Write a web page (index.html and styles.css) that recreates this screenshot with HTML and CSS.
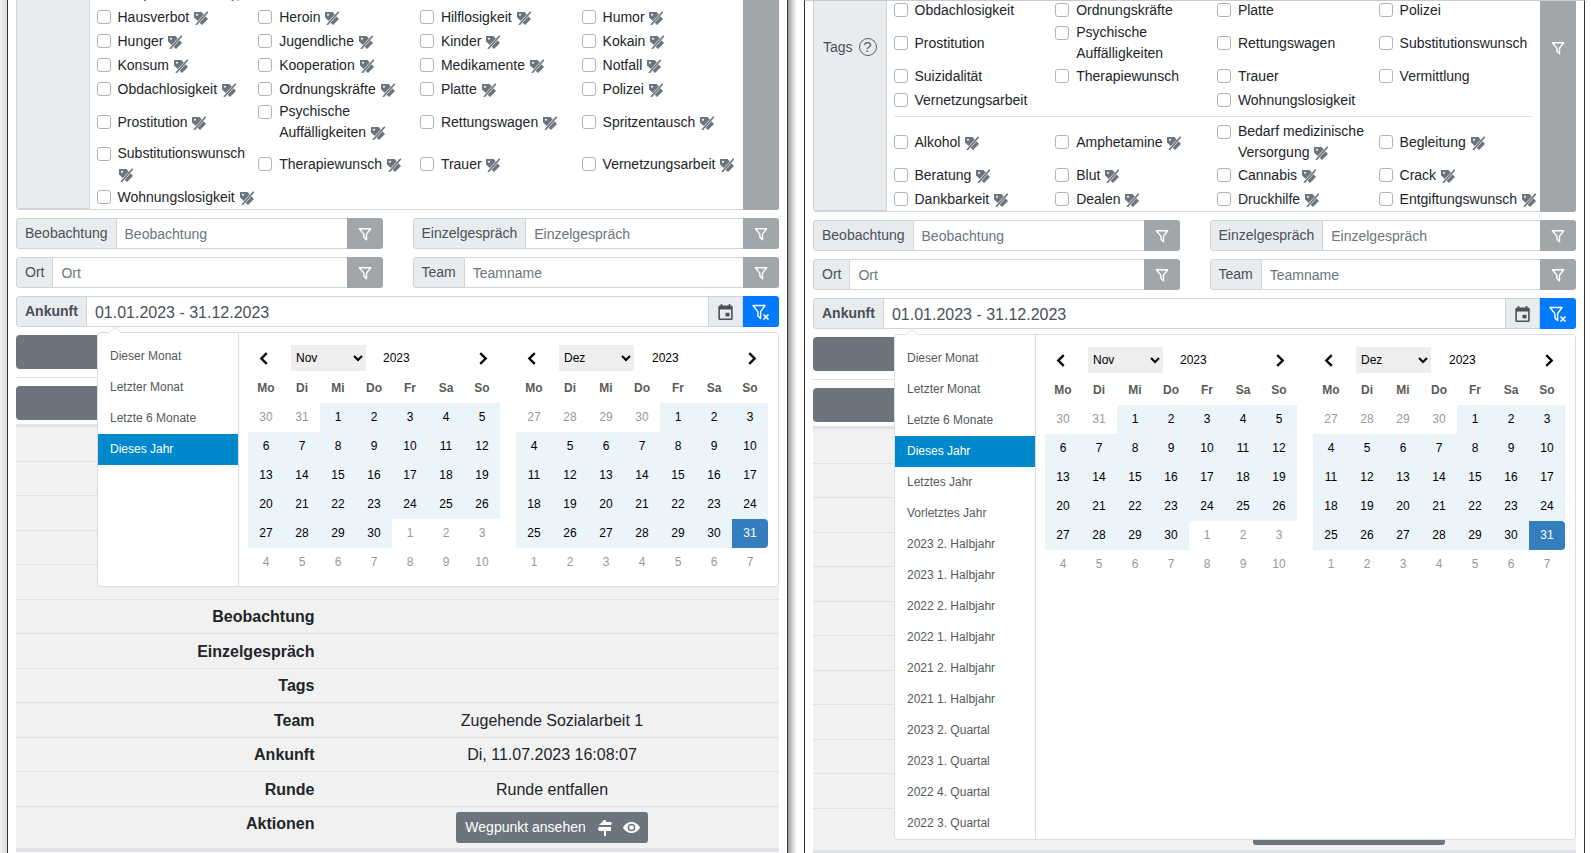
FILE: index.html
```html
<!DOCTYPE html>
<html lang="de">
<head>
    <meta charset="UTF-8">
    <title>Wegpunkte</title>
    <link rel="stylesheet" href="styles.css">
</head>
<body>

    <!-- Icons -->
    <svg class="sprites" xmlns="http://www.w3.org/2000/svg">
        <symbol id="ic-tag" viewBox="0 0 14 14">
            <path fill="currentColor" d="M0 1h7.500l6.500 7-6 6L0 6.500z"/>
            <circle cx="3" cy="3.800" r="1" fill="#fff"/>
            <path stroke="#fff" stroke-width="2.600" d="M14.500 0 1.500 14.500"/>
            <path stroke="currentColor" stroke-width="1.700" d="M13.800 .8 2 14"/>
        </symbol>
        <symbol id="ic-filter" viewBox="0 0 16 16">
            <path fill="none" stroke="currentColor" stroke-width="1.600" stroke-linejoin="round" d="M1.500 2h13L9.700 8.200V14.500L6.700 11.800V8.200z"/>
        </symbol>
        <symbol id="ic-filter-x" viewBox="0 0 18 16">
            <path fill="none" stroke="currentColor" stroke-width="1.400" stroke-linejoin="round" d="M1 1.500h12L8.600 7.600V14.500L5.900 12V7.600z"/>
            <path stroke="currentColor" stroke-width="1.600" d="M11.500 10.500l5 5m0-5l-5 5"/>
        </symbol>
        <symbol id="ic-calendar" viewBox="3 1 18 20">
            <path fill="currentColor" d="M19 3h-1V1h-2v2H8V1H6v2H5a2 2 0 0 0-2 2v14a2 2 0 0 0 2 2h14a2 2 0 0 0 2-2V5a2 2 0 0 0-2-2zm0 16H5V8h14z"/>
            <path fill="currentColor" d="M12 12h5v4.500h-5z"/>
        </symbol>
        <symbol id="ic-signs" viewBox="0 0 14 16">
            <path fill="currentColor" d="M6 0h2v2h5l1 1.500L13 5H1zM1 7h12v4H8v5H6v-5H1l-1-2z"/>
        </symbol>
        <symbol id="ic-eye" viewBox="0 0 17 13">
            <path fill="currentColor" d="M8.500 1C4.500 1 1.500 3.500 0 6.500 1.500 9.500 4.500 12 8.500 12s7-2.500 8.500-5.500C15.500 3.500 12.500 1 8.500 1z"/>
            <circle cx="8.500" cy="6.500" r="3.800" fill="#6c757d"/>
            <circle cx="8.500" cy="6.500" r="2.300" fill="#fff"/>
        </symbol>
        <symbol id="ic-prev" viewBox="0 0 8 12">
            <path fill="none" stroke="currentColor" stroke-width="2.200" d="M7 1 2 6l5 5"/>
        </symbol>
        <symbol id="ic-next" viewBox="0 0 8 12">
            <path fill="none" stroke="currentColor" stroke-width="2.200" d="M1 1l5 5-5 5"/>
        </symbol>
    </svg>

    <div class="edge"></div>

    <!-- Left window -->
    <div class="win win-left">
        <div class="tags">
            <div class="addon tags-label"></div>
            <div class="tags-body">
                <div class="tag-grid">
                    <label class="tag tag-wide"><span class="box"></span><span>Gesprächsbedarf <svg class="ic-tag"><use href="#ic-tag"/></svg></span></label>
                    <label class="tag"><span class="box"></span><span>Hausverbot <svg class="ic-tag"><use href="#ic-tag"/></svg></span></label>
                    <label class="tag"><span class="box"></span><span>Heroin <svg class="ic-tag"><use href="#ic-tag"/></svg></span></label>
                    <label class="tag"><span class="box"></span><span>Hilflosigkeit <svg class="ic-tag"><use href="#ic-tag"/></svg></span></label>
                    <label class="tag"><span class="box"></span><span>Humor <svg class="ic-tag"><use href="#ic-tag"/></svg></span></label>
                    <label class="tag"><span class="box"></span><span>Hunger <svg class="ic-tag"><use href="#ic-tag"/></svg></span></label>
                    <label class="tag"><span class="box"></span><span>Jugendliche <svg class="ic-tag"><use href="#ic-tag"/></svg></span></label>
                    <label class="tag"><span class="box"></span><span>Kinder <svg class="ic-tag"><use href="#ic-tag"/></svg></span></label>
                    <label class="tag"><span class="box"></span><span>Kokain <svg class="ic-tag"><use href="#ic-tag"/></svg></span></label>
                    <label class="tag"><span class="box"></span><span>Konsum <svg class="ic-tag"><use href="#ic-tag"/></svg></span></label>
                    <label class="tag"><span class="box"></span><span>Kooperation <svg class="ic-tag"><use href="#ic-tag"/></svg></span></label>
                    <label class="tag"><span class="box"></span><span>Medikamente <svg class="ic-tag"><use href="#ic-tag"/></svg></span></label>
                    <label class="tag"><span class="box"></span><span>Notfall <svg class="ic-tag"><use href="#ic-tag"/></svg></span></label>
                    <label class="tag"><span class="box"></span><span>Obdachlosigkeit <svg class="ic-tag"><use href="#ic-tag"/></svg></span></label>
                    <label class="tag"><span class="box"></span><span>Ordnungskräfte <svg class="ic-tag"><use href="#ic-tag"/></svg></span></label>
                    <label class="tag"><span class="box"></span><span>Platte <svg class="ic-tag"><use href="#ic-tag"/></svg></span></label>
                    <label class="tag"><span class="box"></span><span>Polizei <svg class="ic-tag"><use href="#ic-tag"/></svg></span></label>
                    <label class="tag"><span class="box"></span><span>Prostitution <svg class="ic-tag"><use href="#ic-tag"/></svg></span></label>
                    <label class="tag"><span class="box"></span><span>Psychische Auffälligkeiten <svg class="ic-tag"><use href="#ic-tag"/></svg></span></label>
                    <label class="tag"><span class="box"></span><span>Rettungswagen <svg class="ic-tag"><use href="#ic-tag"/></svg></span></label>
                    <label class="tag"><span class="box"></span><span>Spritzentausch <svg class="ic-tag"><use href="#ic-tag"/></svg></span></label>
                    <label class="tag"><span class="box"></span><span>Substitutionswunsch <svg class="ic-tag"><use href="#ic-tag"/></svg></span></label>
                    <label class="tag"><span class="box"></span><span>Therapiewunsch <svg class="ic-tag"><use href="#ic-tag"/></svg></span></label>
                    <label class="tag"><span class="box"></span><span>Trauer <svg class="ic-tag"><use href="#ic-tag"/></svg></span></label>
                    <label class="tag"><span class="box"></span><span>Vernetzungsarbeit <svg class="ic-tag"><use href="#ic-tag"/></svg></span></label>
                    <label class="tag"><span class="box"></span><span>Wohnungslosigkeit <svg class="ic-tag"><use href="#ic-tag"/></svg></span></label>
                </div>
            </div>
            <div class="btn-filter"></div>
        </div>

        <div class="field-grid">
            <div class="group">
                <span class="addon">Beobachtung</span>
                <input class="control" placeholder="Beobachtung">
                <span class="btn-filter"><svg class="ic-funnel"><use href="#ic-filter"/></svg></span>
            </div>
            <div class="group">
                <span class="addon">Einzelgespräch</span>
                <input class="control" placeholder="Einzelgespräch">
                <span class="btn-filter"><svg class="ic-funnel"><use href="#ic-filter"/></svg></span>
            </div>
            <div class="group">
                <span class="addon">Ort</span>
                <input class="control" placeholder="Ort">
                <span class="btn-filter"><svg class="ic-funnel"><use href="#ic-filter"/></svg></span>
            </div>
            <div class="group">
                <span class="addon">Team</span>
                <input class="control" placeholder="Teamname">
                <span class="btn-filter"><svg class="ic-funnel"><use href="#ic-filter"/></svg></span>
            </div>
        </div>

        <div class="group date-group">
            <span class="addon addon-bold">Ankunft</span>
            <input class="control control-date" value="01.01.2023 - 31.12.2023">
            <span class="addon addon-cal"><svg class="ic-cal"><use href="#ic-calendar"/></svg></span>
            <span class="btn-clear"><svg class="ic-funnel-x"><use href="#ic-filter-x"/></svg></span>

            <!-- Date range picker -->
            <div class="picker">
                <ul class="ranges">
                    <li>Dieser Monat</li>
                    <li>Letzter Monat</li>
                    <li>Letzte 6 Monate</li>
                    <li class="active">Dieses Jahr</li>
                </ul>
                <div class="calendars">
                    <div class="cal">
                        <div class="cal-head">
                            <svg class="ic-prev"><use href="#ic-prev"/></svg>
                            <select class="month"><option>Nov</option></select>
                            <span class="year">2023</span>
                            <svg class="ic-next"><use href="#ic-next"/></svg>
                        </div>
                        <table>
                            <tr><th>Mo</th><th>Di</th><th>Mi</th><th>Do</th><th>Fr</th><th>Sa</th><th>So</th></tr>
                            <tr><td class="off">30</td><td class="off">31</td><td>1</td><td>2</td><td>3</td><td>4</td><td>5</td></tr>
                            <tr><td>6</td><td>7</td><td>8</td><td>9</td><td>10</td><td>11</td><td>12</td></tr>
                            <tr><td>13</td><td>14</td><td>15</td><td>16</td><td>17</td><td>18</td><td>19</td></tr>
                            <tr><td>20</td><td>21</td><td>22</td><td>23</td><td>24</td><td>25</td><td>26</td></tr>
                            <tr><td>27</td><td>28</td><td>29</td><td>30</td><td class="off">1</td><td class="off">2</td><td class="off">3</td></tr>
                            <tr><td class="off">4</td><td class="off">5</td><td class="off">6</td><td class="off">7</td><td class="off">8</td><td class="off">9</td><td class="off">10</td></tr>
                        </table>
                    </div>
                    <div class="cal">
                        <div class="cal-head">
                            <svg class="ic-prev"><use href="#ic-prev"/></svg>
                            <select class="month"><option>Dez</option></select>
                            <span class="year">2023</span>
                            <svg class="ic-next"><use href="#ic-next"/></svg>
                        </div>
                        <table>
                            <tr><th>Mo</th><th>Di</th><th>Mi</th><th>Do</th><th>Fr</th><th>Sa</th><th>So</th></tr>
                            <tr><td class="off">27</td><td class="off">28</td><td class="off">29</td><td class="off">30</td><td>1</td><td>2</td><td>3</td></tr>
                            <tr><td>4</td><td>5</td><td>6</td><td>7</td><td>8</td><td>9</td><td>10</td></tr>
                            <tr><td>11</td><td>12</td><td>13</td><td>14</td><td>15</td><td>16</td><td>17</td></tr>
                            <tr><td>18</td><td>19</td><td>20</td><td>21</td><td>22</td><td>23</td><td>24</td></tr>
                            <tr><td>25</td><td>26</td><td>27</td><td>28</td><td>29</td><td>30</td><td class="end">31</td></tr>
                            <tr><td class="off">1</td><td class="off">2</td><td class="off">3</td><td class="off">4</td><td class="off">5</td><td class="off">6</td><td class="off">7</td></tr>
                        </table>
                    </div>
                </div>
            </div>
        </div>

        <div class="btn-bar"></div>
        <div class="rule"></div>
        <div class="btn-bar"></div>

        <!-- Result table -->
        <div class="results">
            <div class="row"></div>
            <div class="row"></div>
            <div class="row"></div>
            <div class="row"></div>
            <div class="row"></div>
            <div class="row"><b>Beobachtung</b><span></span></div>
            <div class="row"><b>Einzelgespräch</b><span></span></div>
            <div class="row"><b>Tags</b><span></span></div>
            <div class="row"><b>Team</b><span>Zugehende Sozialarbeit 1</span></div>
            <div class="row"><b>Ankunft</b><span>Di, 11.07.2023 16:08:07</span></div>
            <div class="row"><b>Runde</b><span>Runde entfallen</span></div>
            <div class="row row-actions">
                <b>Aktionen</b>
                <span><a class="btn-way">Wegpunkt ansehen <svg class="ic-signs"><use href="#ic-signs"/></svg><svg class="ic-eye"><use href="#ic-eye"/></svg></a></span>
            </div>
        </div>
    </div>

    <div class="gutter"></div>

    <!-- Right window -->
    <div class="win win-right">
        <div class="tags">
            <div class="addon tags-label">Tags <span class="help">?</span></div>
            <div class="tags-body">
                <div class="tag-grid">
                    <label class="tag"><span class="box"></span><span>Obdachlosigkeit</span></label>
                    <label class="tag"><span class="box"></span><span>Ordnungskräfte</span></label>
                    <label class="tag"><span class="box"></span><span>Platte</span></label>
                    <label class="tag"><span class="box"></span><span>Polizei</span></label>
                    <label class="tag"><span class="box"></span><span>Prostitution</span></label>
                    <label class="tag"><span class="box"></span><span>Psychische Auffälligkeiten</span></label>
                    <label class="tag"><span class="box"></span><span>Rettungswagen</span></label>
                    <label class="tag"><span class="box"></span><span>Substitutionswunsch</span></label>
                    <label class="tag"><span class="box"></span><span>Suizidalität</span></label>
                    <label class="tag"><span class="box"></span><span>Therapiewunsch</span></label>
                    <label class="tag"><span class="box"></span><span>Trauer</span></label>
                    <label class="tag"><span class="box"></span><span>Vermittlung</span></label>
                    <label class="tag"><span class="box"></span><span>Vernetzungsarbeit</span></label>
                    <div></div>
                    <label class="tag"><span class="box"></span><span>Wohnungslosigkeit</span></label>
                    <div></div>
                </div>
                <hr class="tag-rule">
                <div class="tag-grid">
                    <label class="tag"><span class="box"></span><span>Alkohol <svg class="ic-tag"><use href="#ic-tag"/></svg></span></label>
                    <label class="tag"><span class="box"></span><span>Amphetamine <svg class="ic-tag"><use href="#ic-tag"/></svg></span></label>
                    <label class="tag"><span class="box"></span><span>Bedarf medizinische Versorgung <svg class="ic-tag"><use href="#ic-tag"/></svg></span></label>
                    <label class="tag"><span class="box"></span><span>Begleitung <svg class="ic-tag"><use href="#ic-tag"/></svg></span></label>
                    <label class="tag"><span class="box"></span><span>Beratung <svg class="ic-tag"><use href="#ic-tag"/></svg></span></label>
                    <label class="tag"><span class="box"></span><span>Blut <svg class="ic-tag"><use href="#ic-tag"/></svg></span></label>
                    <label class="tag"><span class="box"></span><span>Cannabis <svg class="ic-tag"><use href="#ic-tag"/></svg></span></label>
                    <label class="tag"><span class="box"></span><span>Crack <svg class="ic-tag"><use href="#ic-tag"/></svg></span></label>
                    <label class="tag"><span class="box"></span><span>Dankbarkeit <svg class="ic-tag"><use href="#ic-tag"/></svg></span></label>
                    <label class="tag"><span class="box"></span><span>Dealen <svg class="ic-tag"><use href="#ic-tag"/></svg></span></label>
                    <label class="tag"><span class="box"></span><span>Druckhilfe <svg class="ic-tag"><use href="#ic-tag"/></svg></span></label>
                    <label class="tag"><span class="box"></span><span>Entgiftungswunsch <svg class="ic-tag"><use href="#ic-tag"/></svg></span></label>
                </div>
            </div>
            <div class="btn-filter"><svg class="ic-funnel"><use href="#ic-filter"/></svg></div>
        </div>

        <div class="field-grid">
            <div class="group">
                <span class="addon">Beobachtung</span>
                <input class="control" placeholder="Beobachtung">
                <span class="btn-filter"><svg class="ic-funnel"><use href="#ic-filter"/></svg></span>
            </div>
            <div class="group">
                <span class="addon">Einzelgespräch</span>
                <input class="control" placeholder="Einzelgespräch">
                <span class="btn-filter"><svg class="ic-funnel"><use href="#ic-filter"/></svg></span>
            </div>
            <div class="group">
                <span class="addon">Ort</span>
                <input class="control" placeholder="Ort">
                <span class="btn-filter"><svg class="ic-funnel"><use href="#ic-filter"/></svg></span>
            </div>
            <div class="group">
                <span class="addon">Team</span>
                <input class="control" placeholder="Teamname">
                <span class="btn-filter"><svg class="ic-funnel"><use href="#ic-filter"/></svg></span>
            </div>
        </div>

        <div class="group date-group">
            <span class="addon addon-bold">Ankunft</span>
            <input class="control control-date" value="01.01.2023 - 31.12.2023">
            <span class="addon addon-cal"><svg class="ic-cal"><use href="#ic-calendar"/></svg></span>
            <span class="btn-clear"><svg class="ic-funnel-x"><use href="#ic-filter-x"/></svg></span>

            <!-- Date range picker -->
            <div class="picker">
                <ul class="ranges">
                    <li>Dieser Monat</li>
                    <li>Letzter Monat</li>
                    <li>Letzte 6 Monate</li>
                    <li class="active">Dieses Jahr</li>
                    <li>Letztes Jahr</li>
                    <li>Vorletztes Jahr</li>
                    <li>2023 2. Halbjahr</li>
                    <li>2023 1. Halbjahr</li>
                    <li>2022 2. Halbjahr</li>
                    <li>2022 1. Halbjahr</li>
                    <li>2021 2. Halbjahr</li>
                    <li>2021 1. Halbjahr</li>
                    <li>2023 2. Quartal</li>
                    <li>2023 1. Quartal</li>
                    <li>2022 4. Quartal</li>
                    <li>2022 3. Quartal</li>
                </ul>
                <div class="calendars">
                    <div class="cal">
                        <div class="cal-head">
                            <svg class="ic-prev"><use href="#ic-prev"/></svg>
                            <select class="month"><option>Nov</option></select>
                            <span class="year">2023</span>
                            <svg class="ic-next"><use href="#ic-next"/></svg>
                        </div>
                        <table>
                            <tr><th>Mo</th><th>Di</th><th>Mi</th><th>Do</th><th>Fr</th><th>Sa</th><th>So</th></tr>
                            <tr><td class="off">30</td><td class="off">31</td><td>1</td><td>2</td><td>3</td><td>4</td><td>5</td></tr>
                            <tr><td>6</td><td>7</td><td>8</td><td>9</td><td>10</td><td>11</td><td>12</td></tr>
                            <tr><td>13</td><td>14</td><td>15</td><td>16</td><td>17</td><td>18</td><td>19</td></tr>
                            <tr><td>20</td><td>21</td><td>22</td><td>23</td><td>24</td><td>25</td><td>26</td></tr>
                            <tr><td>27</td><td>28</td><td>29</td><td>30</td><td class="off">1</td><td class="off">2</td><td class="off">3</td></tr>
                            <tr><td class="off">4</td><td class="off">5</td><td class="off">6</td><td class="off">7</td><td class="off">8</td><td class="off">9</td><td class="off">10</td></tr>
                        </table>
                    </div>
                    <div class="cal">
                        <div class="cal-head">
                            <svg class="ic-prev"><use href="#ic-prev"/></svg>
                            <select class="month"><option>Dez</option></select>
                            <span class="year">2023</span>
                            <svg class="ic-next"><use href="#ic-next"/></svg>
                        </div>
                        <table>
                            <tr><th>Mo</th><th>Di</th><th>Mi</th><th>Do</th><th>Fr</th><th>Sa</th><th>So</th></tr>
                            <tr><td class="off">27</td><td class="off">28</td><td class="off">29</td><td class="off">30</td><td>1</td><td>2</td><td>3</td></tr>
                            <tr><td>4</td><td>5</td><td>6</td><td>7</td><td>8</td><td>9</td><td>10</td></tr>
                            <tr><td>11</td><td>12</td><td>13</td><td>14</td><td>15</td><td>16</td><td>17</td></tr>
                            <tr><td>18</td><td>19</td><td>20</td><td>21</td><td>22</td><td>23</td><td>24</td></tr>
                            <tr><td>25</td><td>26</td><td>27</td><td>28</td><td>29</td><td>30</td><td class="end">31</td></tr>
                            <tr><td class="off">1</td><td class="off">2</td><td class="off">3</td><td class="off">4</td><td class="off">5</td><td class="off">6</td><td class="off">7</td></tr>
                        </table>
                    </div>
                </div>
            </div>
        </div>

        <div class="btn-bar"></div>
        <div class="rule"></div>
        <div class="btn-bar"></div>

        <!-- Result table -->
        <div class="results">
            <div class="row"></div>
            <div class="row"></div>
            <div class="row"></div>
            <div class="row"></div>
            <div class="row"></div>
            <div class="row"><b>Beobachtung</b><span></span></div>
            <div class="row"><b>Einzelgespräch</b><span></span></div>
            <div class="row"><b>Tags</b><span></span></div>
            <div class="row"><b>Team</b><span>Zugehende Sozialarbeit 1</span></div>
            <div class="row"><b>Ankunft</b><span>Di, 11.07.2023 16:08:07</span></div>
            <div class="row"><b>Runde</b><span>Runde entfallen</span></div>
            <div class="row row-actions">
                <b>Aktionen</b>
                <span><a class="btn-way">Wegpunkt ansehen <svg class="ic-signs"><use href="#ic-signs"/></svg><svg class="ic-eye"><use href="#ic-eye"/></svg></a></span>
            </div>
        </div>
    </div>

</body>
</html>
```

FILE: styles.css
```css
html, body {
    height: 100%;
}

body {
    margin: 0;
    width: 1591px;
    height: 853px;
    overflow: hidden;
    display: flex;
    align-items: stretch;
    background-color: #fff;
    color: #212529;
    font-family: "Liberation Sans", Arial, sans-serif;
    font-size: 14px;
}

.sprites {
    display: none;
}

/* Window frames */
.edge {
    width: 7px;
    flex: none;
    background: linear-gradient(to right, #f2f2f2, #dcdcdc);
}

.gutter {
    width: 16px;
    flex: none;
    border-left: 1px solid #333;
    background: linear-gradient(to right, #9a9a9a, #d8d8d8 5px, #fff 9px);
}

.win {
    width: 763px;
    flex: none;
    padding: 0 8px;
    border-left: 1px solid #333;
    overflow: hidden;
}

.win-right {
    border-right: 1px solid #333;
    border-top: 1px solid #ccc;
}

/* Tag filter */
.tags {
    display: flex;
    align-items: stretch;
    margin-bottom: 8px;
    border: 1px solid #ced4da;
    border-radius: 3px;
    border-left: 0;
    border-right: 0;
}

.win-left .tags {
    margin-top: -20px;
}

.win-right .tags {
    margin-top: -118px;
}

.tags-label {
    width: 73.5px;
    flex: none;
    box-sizing: border-box;
    border-width: 0 1px 0 1px;
    border-radius: 3px 0 0 3px;
    gap: 6px;
}

.tags-body {
    flex: 1;
    min-width: 0;
    padding-left: 7px;
}

.win-right .tags-body {
    padding-top: 114px;
}

.tag-grid {
    display: grid;
    grid-template-columns: repeat(4, 161.7px);
    grid-auto-rows: minmax(24px, auto);
    align-items: center;
}

.tag {
    display: flex;
    align-items: flex-start;
    gap: 7px;
    line-height: 21px;
}

.tag-wide {
    grid-column: 1 / -1;
}

.box {
    width: 14px;
    height: 14px;
    flex: none;
    margin-top: 3.5px;
    box-sizing: border-box;
    border: 1px solid #adb5bd;
    border-radius: 3px;
    background-color: #fff;
}

.ic-tag {
    width: 14px;
    height: 14px;
    margin-left: 1px;
    vertical-align: -3px;
    color: #6c757d;
}

.tag-rule {
    height: 1px;
    margin: 4px 8px 4px 0;
    border: 0;
    background-color: #dfe2e5;
}

.help {
    display: inline-block;
    width: 18px;
    height: 18px;
    box-sizing: border-box;
    border: 1.5px solid #5a6268;
    border-radius: 50%;
    font-size: 15px;
    line-height: 15px;
    text-align: center;
    color: #5a6268;
}

/* Input groups */
.field-grid {
    display: grid;
    grid-template-columns: 1fr 1fr;
    column-gap: 30px;
}

.group {
    display: flex;
    height: 31px;
    margin-bottom: 8px;
}

.addon {
    display: flex;
    align-items: center;
    justify-content: center;
    flex: none;
    box-sizing: border-box;
    padding: 0 8px 2px;
    background-color: #e9ecef;
    border: 1px solid #ced4da;
    border-radius: 3px 0 0 3px;
    color: #495057;
}

.addon-bold {
    font-weight: bold;
}

.addon-cal {
    width: 35px;
    padding: 0;
    border-radius: 0;
}

.control {
    flex: 1;
    min-width: 0;
    box-sizing: border-box;
    padding: 0 8px;
    border: 1px solid #ced4da;
    border-left: 0;
    border-right: 0;
    font-family: inherit;
    font-size: 14px;
    color: #495057;
    background-color: #fff;
    outline: none;
}

.control::placeholder {
    color: #6c757d;
    opacity: 1;
}

.control-date {
    padding-top: 2px;
    font-size: 16px;
}

.btn-filter {
    width: 36px;
    flex: none;
    display: flex;
    align-items: center;
    justify-content: center;
    background-color: #a1a6aa;
    border-radius: 0 3px 3px 0;
    color: #fff;
}

.tags .btn-filter {
    margin-top: -1px;
    margin-bottom: -1px;
}

.btn-clear {
    width: 36px;
    flex: none;
    display: flex;
    align-items: center;
    justify-content: center;
    background-color: #007bff;
    border-radius: 0 3px 3px 0;
    color: #fff;
}

.ic-funnel {
    width: 14px;
    height: 14px;
}

.ic-funnel-x {
    width: 18px;
    height: 16px;
}

.ic-cal {
    width: 15px;
    height: 16px;
    color: #495057;
}

/* Date range picker */
.date-group {
    position: relative;
}

.picker {
    position: absolute;
    top: 36px;
    left: 81px;
    right: 0;
    z-index: 5;
    display: flex;
    align-items: stretch;
    background-color: #fff;
    border: 1px solid #ddd;
    border-radius: 4px;
    font-size: 12px;
}

.picker::before,
.picker::after {
    content: "";
    position: absolute;
    left: 10px;
    border-style: solid;
    border-color: transparent;
    border-top: 0;
}

.picker::before {
    top: -6px;
    border-width: 0 7px 6px;
    border-bottom-color: #ddd;
}

.picker::after {
    top: -5px;
    left: 11px;
    border-width: 0 6px 5px;
    border-bottom-color: #fff;
}

.ranges {
    list-style: none;
    width: 140px;
    flex: none;
    margin: 0;
    padding: 8px 0 0;
    border-right: 1px solid #ddd;
}

.ranges li {
    height: 31px;
    padding: 8px 12px;
    box-sizing: border-box;
    line-height: 15px;
    color: #55595c;
}

.ranges .active {
    background-color: #08c;
    color: #fff;
}

.calendars {
    display: flex;
    align-items: flex-start;
    gap: 16px;
    padding: 12px 0 9px 9px;
}

.cal {
    width: 252px;
}

.cal-head {
    display: flex;
    align-items: center;
    height: 26px;
    margin-bottom: 3px;
}

.ic-prev,
.ic-next {
    width: 9px;
    height: 13px;
    flex: none;
    color: #000;
}

.ic-prev {
    margin-left: 11px;
    margin-right: 23px;
}

.ic-next {
    margin-left: auto;
    margin-right: 12px;
}

.cal + .cal .ic-next {
    margin-right: 11px;
}

.month {
    width: 75px;
    height: 26px;
    padding: 0 1px;
    border: 0;
    border-radius: 0;
    background-color: #eee;
    font-family: inherit;
    font-size: 12px;
    color: #000;
}

.year {
    margin-left: 17px;
    color: #000;
}

.cal + .cal .year {
    margin-left: 18px;
}

.cal table {
    width: 252px;
    border-collapse: collapse;
    table-layout: fixed;
}

.cal th,
.cal td {
    box-sizing: border-box;
    height: 29px;
    padding: 0 0 1px;
    text-align: center;
}

.cal th {
    color: #5a5a5a;
}

.cal td {
    background-color: #ebf4f8;
    color: #000;
}

.cal td.off {
    background-color: #fff;
    color: #999;
}

.cal td.end {
    background-color: #357ebd;
    color: #fff;
    border-radius: 0 4px 4px 0;
}

/* Buttons behind the picker */
.btn-bar {
    height: 34px;
    background-color: #6c757d;
    border-radius: 4px;
}

.rule {
    height: 1px;
    margin: 8px 0;
    background-color: #e3e3e3;
}

/* Result table */
.results {
    margin-top: 4px;
    border-top: 3px solid #dee2e6;
    border-bottom: 4px solid #dee2e6;
    background-color: #f1f1f1;
    font-size: 16px;
    line-height: 24px;
}

.row {
    display: flex;
    box-sizing: border-box;
    height: 34.55px;
    padding-top: 5.3px;
    border-bottom: 1px solid #dee2e6;
}

.row b {
    width: 298.5px;
    flex: none;
    text-align: right;
}

.row span {
    flex: 1;
    margin-left: 16.5px;
    margin-right: 6px;
    text-align: center;
}

.row-actions {
    height: 41px;
    padding-top: 5px;
    border-bottom: 0;
}

.btn-way {
    display: inline-flex;
    align-items: center;
    height: 31px;
    padding: 0 8px 2px 9px;
    box-sizing: border-box;
    background-color: #6c757d;
    border-radius: 3px;
    color: #fff;
    font-size: 14px;
    white-space: pre;
}

.ic-signs {
    width: 14px;
    height: 16px;
    margin-left: 8px;
    margin-top: 2px;
}

.ic-eye {
    width: 17px;
    height: 13px;
    margin-left: 11px;
    margin-top: 2px;
}
```
